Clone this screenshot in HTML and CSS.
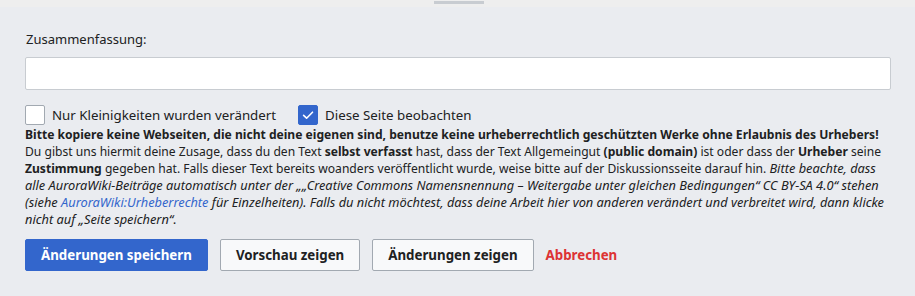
FILE: index.html
```html
<!DOCTYPE html>
<html lang="de">
<head>
<meta charset="utf-8">
<link rel="stylesheet" href="styles.css">
</head>
<body>
<div class="topbar"><div class="handle"></div></div>
<div class="edit">
  <label class="summary-label" for="sum">Zusammenfassung:</label>
  <input id="sum" class="summary-input" type="text">
  <div class="checks">
    <label class="check"><span class="box"></span>Nur Kleinigkeiten wurden verändert</label>
    <label class="check"><span class="box checked"><svg viewBox="0 0 20 20" width="20" height="20"><path d="M5.6 10.3 L8.6 13.2 L14.5 7.2" fill="none" stroke="#fff" stroke-width="1.6" stroke-linecap="round" stroke-linejoin="round"/></svg></span>Diese Seite beobachten</label>
  </div>
  <div class="notice">
    <p class="warn">Bitte kopiere keine Webseiten, die nicht deine eigenen sind, benutze keine urheberrechtlich geschützten Werke ohne Erlaubnis des Urhebers!</p>
    <p class="text">Du gibst uns hiermit deine Zusage, dass du den Text <b>selbst verfasst</b> hast, dass der Text Allgemeingut <b>(public domain)</b> ist oder dass der <b>Urheber</b> seine <b>Zustimmung</b> gegeben hat. Falls dieser Text bereits woanders veröffentlicht wurde, weise bitte auf der Diskussionsseite darauf hin. <i>Bitte beachte, dass alle AuroraWiki-Beiträge automatisch unter der „„Creative Commons Namensnennung – Weitergabe unter gleichen Bedingungen“ CC BY-SA 4.0“ stehen (siehe <a href="#">AuroraWiki:Urheberrechte</a> für Einzelheiten). Falls du nicht möchtest, dass deine Arbeit hier von anderen verändert und verbreitet wird, dann klicke nicht auf „Seite speichern“.</i></p>
  </div>
  <div class="buttons">
    <button class="btn primary">Änderungen speichern</button>
    <button class="btn">Vorschau zeigen</button>
    <button class="btn">Änderungen zeigen</button>
    <a class="cancel" href="#">Abbrechen</a>
  </div>
</div>
</body>
</html>
```
FILE: styles.css
```css
* { box-sizing: border-box; }
body {
  margin: 0;
  background: #eaecf0;
  font-family: "Noto Sans", "Open Sans", sans-serif;
  color: #202122;
  font-size: 13px;
}
.topbar {
  height: 7px;
  background: #eeeeee;
  display: flex;
  justify-content: center;
}
.handle {
  width: 50px;
  height: 3px;
  margin-top: 1px;
  background: #c8ccd1;
  position: relative;
  left: 1px;
}
.edit {
  padding: 22px 24px 0 25px;
}
.summary-label {
  display: block;
  font-size: 13px;
  line-height: 20px;
  color: #202122;
  padding-left: 1px;
}
.summary-input {
  display: block;
  width: 866px;
  height: 33px;
  margin-top: 8px;
  border: 1px solid #c8ccd1;
  border-radius: 2px;
  background: #fff;
}
.checks {
  display: flex;
  gap: 22px;
  margin-top: 14px;
  height: 22px;
  align-items: center;
}
.check {
  display: flex;
  align-items: center;
  gap: 7px;
  font-size: 13.3px;
  color: #202122;
}
.box {
  width: 20px;
  height: 20px;
  border: 1px solid #a2a9b1;
  border-radius: 2px;
  background: #fff;
  display: block;
}
.box.checked {
  background: #3366cc;
  border-color: #3366cc;
}
.box svg { display: block; margin: -1px; }
.notice {
  margin-top: 0;
  font-size: 12.1px;
  line-height: 17px;
}
.notice p { margin: 0; }
.notice i { font-size: 12.8px; }
.warn { font-weight: bold; }
.notice a { color: #3366cc; text-decoration: none; }
.buttons {
  display: flex;
  align-items: center;
  gap: 12px;
  margin-top: 11px;
}
.btn {
  font-family: inherit;
  font-size: 13.3px;
  font-weight: bold;
  height: 32px;
  padding: 0 15px;
  border: 1px solid #a2a9b1;
  border-radius: 2px;
  background: #f8f9fa;
  color: #202122;
}
.btn.primary {
  background: #3366cc;
  border-color: #3366cc;
  color: #fff;
}
.cancel {
  font-size: 13.3px;
  color: #d33;
  font-weight: bold;
  text-decoration: none;
  margin-left: 0;
}
```
